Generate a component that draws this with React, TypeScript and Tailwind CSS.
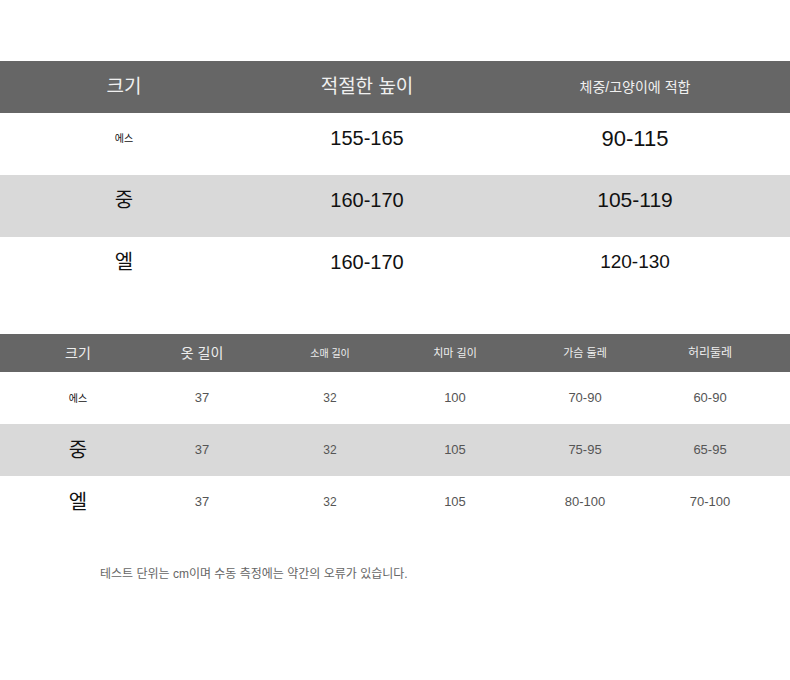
const FONT = { fontFamily: '"Liberation Sans", "Noto Sans CJK KR", sans-serif' }

const TOP = [
  { size: '에스', sizeCls: 'text-[10px]', h: '155-165', w: '90-115', wCls: 'text-[22px]', bg: 'bg-white' },
  { size: '중', sizeCls: 'text-[20px]', h: '160-170', w: '105-119', wCls: 'text-[21px]', bg: 'bg-[#d9d9d9]' },
  { size: '엘', sizeCls: 'text-[20px]', h: '160-170', w: '120-130', wCls: 'text-[19px]', bg: 'bg-white' },
]

const BOTTOM = [
  { size: '에스', sizeCls: 'text-[10px]', vals: ['37', '32', '100', '70-90', '60-90'], bg: 'bg-white' },
  { size: '중', sizeCls: 'text-[20px]', vals: ['37', '32', '105', '75-95', '65-95'], bg: 'bg-[#d9d9d9]' },
  { size: '엘', sizeCls: 'text-[20px]', vals: ['37', '32', '105', '80-100', '70-100'], bg: 'bg-white' },
]

const COLS2 = 'grid grid-cols-[156px_92px_164px_86px_174px_76px_1fr] items-center'

export default function App() {
  return (
    <div className="w-[790px] h-[680px] bg-white pt-[61px]" style={FONT}>
      {/* Height / weight table */}
      <div className="grid grid-cols-[248px_238px_1fr] items-center h-[52px] bg-[#666666] text-[#f0f0f0] text-center">
        <div className="text-[19px]">크기</div>
        <div className="text-[19px]">적절한 높이</div>
        <div className="text-[14px] pr-[6px]">체중/고양이에 적합</div>
      </div>
      {TOP.map((r) => (
        <div key={r.size} className={`grid grid-cols-[248px_238px_1fr] items-center h-[62px] pb-[12px] text-center text-[#111] ${r.bg}`}>
          <div className={r.sizeCls}>{r.size}</div>
          <div className="text-[20px]">{r.h}</div>
          <div className={`${r.wCls} pr-[6px]`}>{r.w}</div>
        </div>
      ))}

      {/* Measurements table */}
      <div className={`${COLS2} mt-[35px] h-[38px] bg-[#666666] text-[#eeeeee] text-center`}>
        <div className="text-[14px]">크기</div>
        <div className="text-[14px]">옷 길이</div>
        <div className="text-[10px]">소매 길이</div>
        <div className="text-[11px]">치마 길이</div>
        <div className="text-[11px]">가슴 둘레</div>
        <div className="text-[12px]">허리둘레</div>
        <div />
      </div>
      {BOTTOM.map((r) => (
        <div key={r.size} className={`${COLS2} h-[52px] text-center ${r.bg}`}>
          <div className={`${r.sizeCls} text-[#111]`}>{r.size}</div>
          {r.vals.map((v, i) => (
            <div key={i} className={i === 1 ? 'text-[12px] text-[#555]' : 'text-[13px] text-[#555]'}>{v}</div>
          ))}
          <div />
        </div>
      ))}

      <p className="mt-[37px] pl-[100px] text-[12px] text-[#666]">
        테스트 단위는 cm이며 수동 측정에는 약간의 오류가 있습니다.
      </p>
    </div>
  )
}
